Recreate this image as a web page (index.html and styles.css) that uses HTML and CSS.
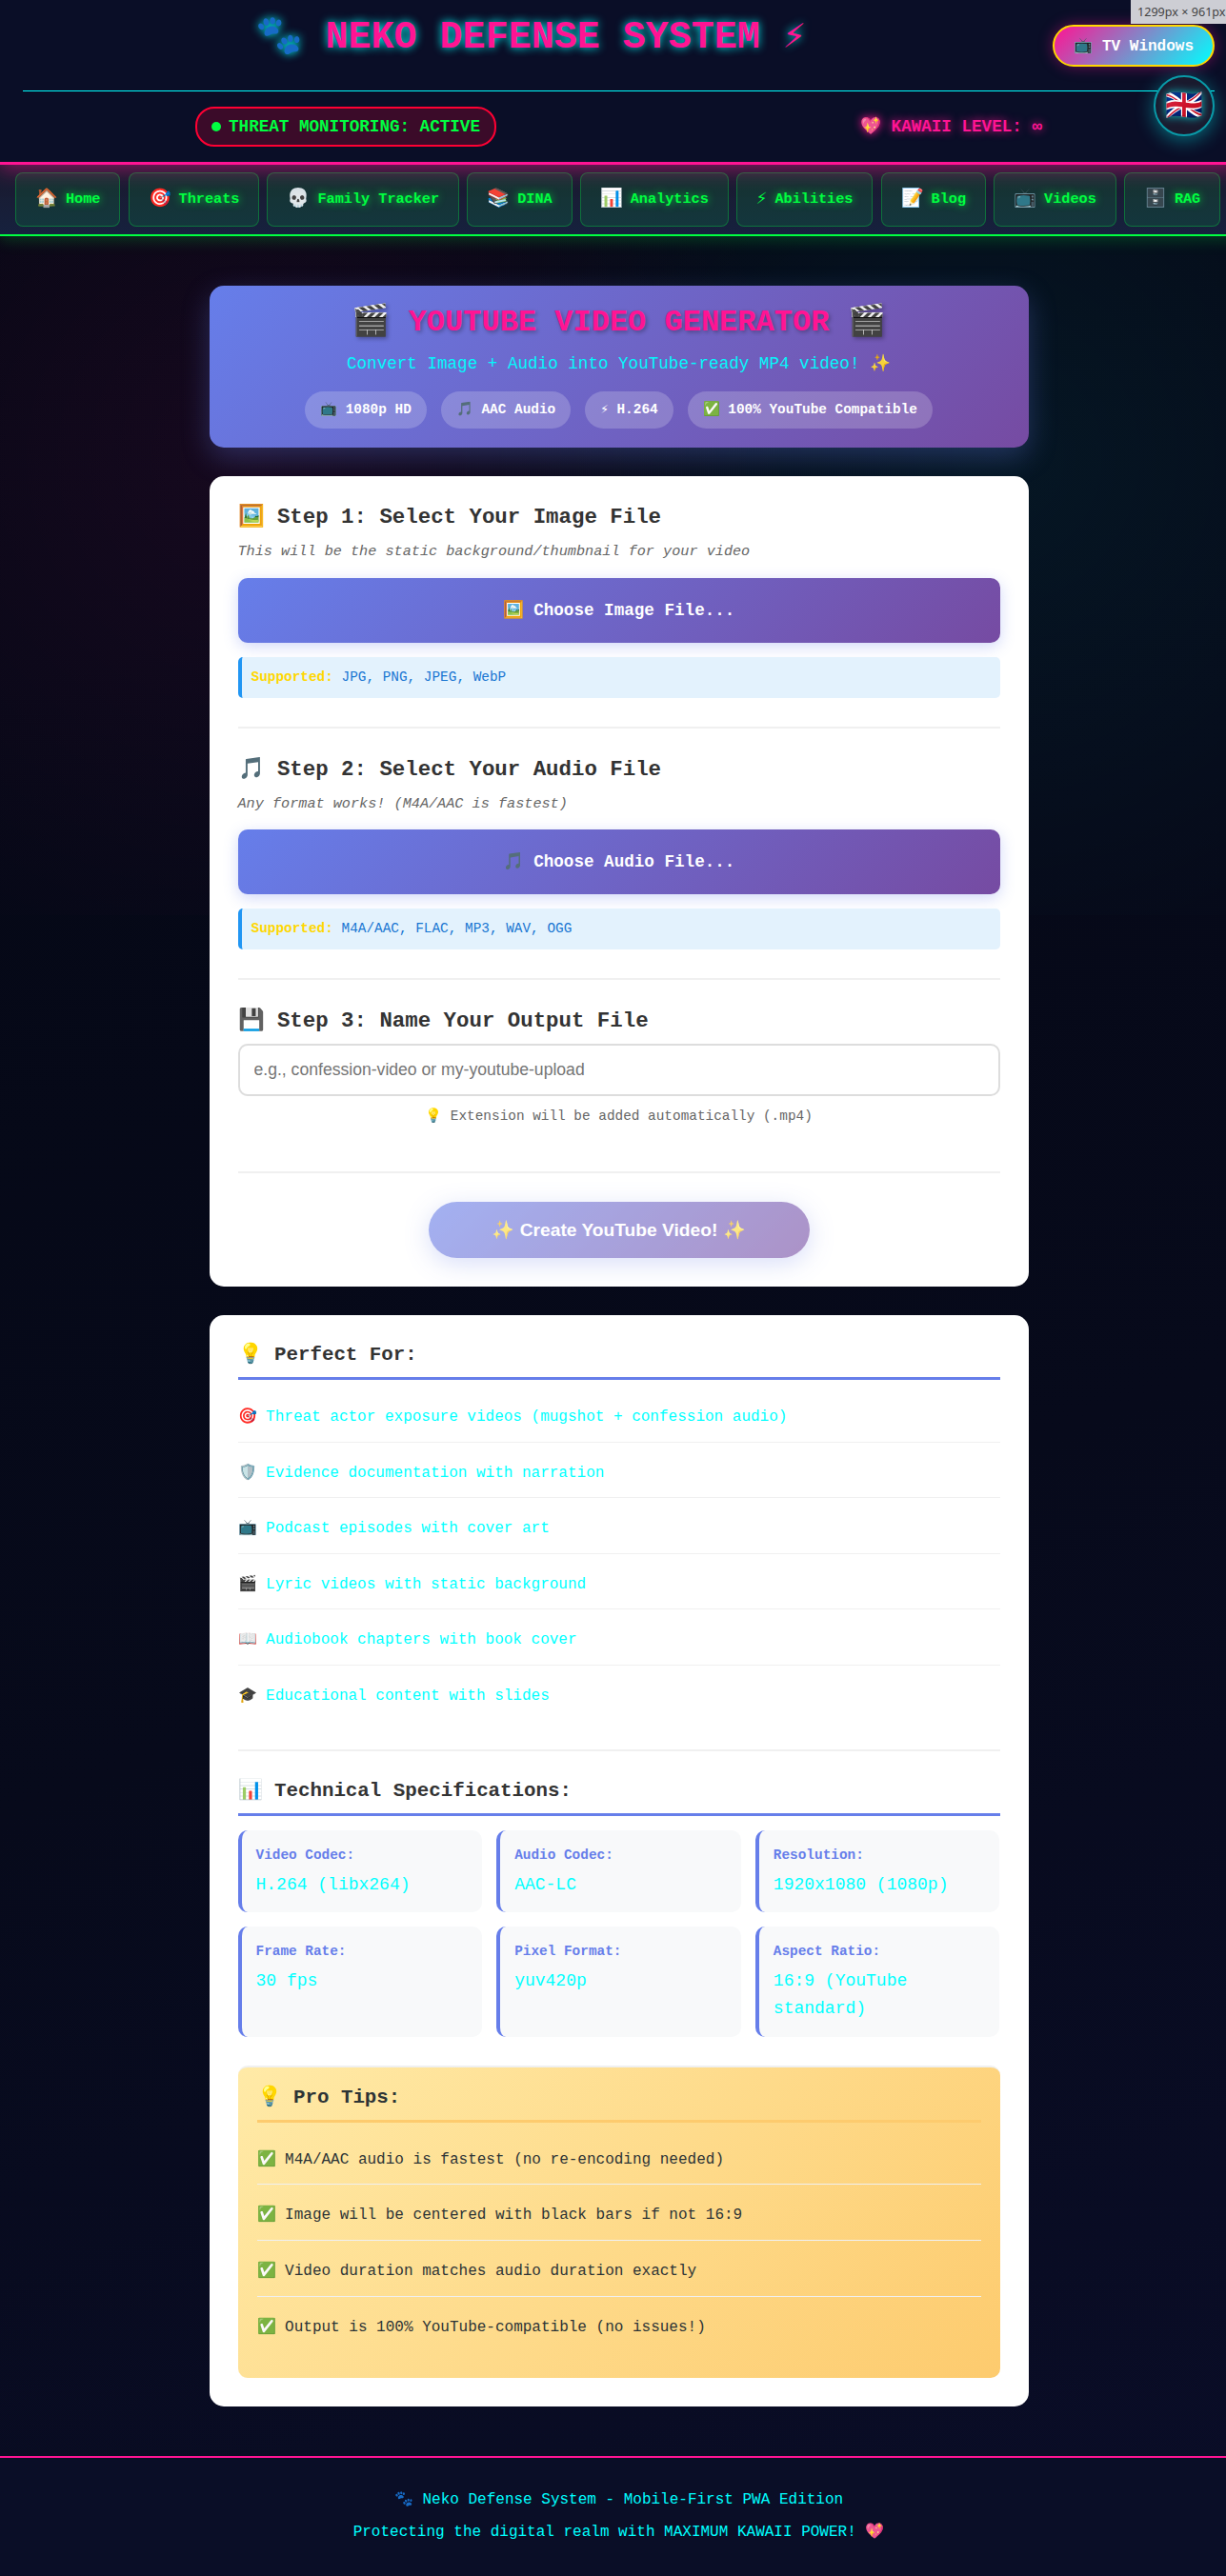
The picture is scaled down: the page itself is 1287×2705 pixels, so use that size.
FILE: index.html
```html
<!DOCTYPE html>
<html lang="en">
<head>
<meta charset="UTF-8">
<title>Neko Defense System - YouTube Video Generator</title>
<link rel="stylesheet" href="styles.css">
</head>
<body>
<div class="page">
  <header class="header">
    <div class="header-top">
      <h1 class="brand">🐾 NEKO DEFENSE SYSTEM ⚡</h1>
      <a class="tv-button">📺 TV Windows</a>
    </div>
    <div class="status-row">
      <div class="threat-status"><span class="dot"></span>THREAT MONITORING: ACTIVE</div>
      <div class="kawaii">💖 KAWAII LEVEL: ∞</div>
    </div>
    <div class="language">🇬🇧</div>
  </header>
  <nav class="nav">
    <a class="nav-item"><span class="nav-icon">🏠</span>Home</a>
    <a class="nav-item"><span class="nav-icon">🎯</span>Threats</a>
    <a class="nav-item"><span class="nav-icon">💀</span>Family Tracker</a>
    <a class="nav-item"><span class="nav-icon">📚</span>DINA</a>
    <a class="nav-item"><span class="nav-icon">📊</span>Analytics</a>
    <a class="nav-item"><span class="nav-icon">⚡</span>Abilities</a>
    <a class="nav-item"><span class="nav-icon">📝</span>Blog</a>
    <a class="nav-item"><span class="nav-icon">📺</span>Videos</a>
    <a class="nav-item"><span class="nav-icon">🗄️</span>RAG</a>
  </nav>
  <main class="main">
    <section class="hero">
      <h1 class="hero-title">🎬 YOUTUBE VIDEO GENERATOR 🎬</h1>
      <p class="hero-sub">Convert Image + Audio into YouTube-ready MP4 video! ✨</p>
      <div class="badges">
        <span class="badge">📺 1080p HD</span>
        <span class="badge">🎵 AAC Audio</span>
        <span class="badge">⚡ H.264</span>
        <span class="badge">✅ 100% YouTube Compatible</span>
      </div>
    </section>
    <div class="card">
      <section class="step">
        <h2 class="step-title">🖼️ Step 1: Select Your Image File</h2>
        <p class="step-desc">This will be the static background/thumbnail for your video</p>
        <label class="file-button">🖼️ Choose Image File...</label>
        <div class="formats"><strong>Supported:</strong> JPG, PNG, JPEG, WebP</div>
      </section>
      <section class="step">
        <h2 class="step-title">🎵 Step 2: Select Your Audio File</h2>
        <p class="step-desc">Any format works! (M4A/AAC is fastest)</p>
        <label class="file-button">🎵 Choose Audio File...</label>
        <div class="formats"><strong>Supported:</strong> M4A/AAC, FLAC, MP3, WAV, OGG</div>
      </section>
      <section class="step step-name">
        <h2 class="step-title">💾 Step 3: Name Your Output File</h2>
        <input class="name-input" type="text" placeholder="e.g., confession-video or my-youtube-upload">
        <p class="name-hint">💡 Extension will be added automatically (.mp4)</p>
      </section>
      <section class="step step-action">
        <button class="create-button" type="button">✨ Create YouTube Video! ✨</button>
      </section>
    </div>
    <div class="card">
      <section class="info">
        <h3 class="info-title">💡 Perfect For:</h3>
        <ul class="list">
          <li>🎯 Threat actor exposure videos (mugshot + confession audio)</li>
          <li>🛡️ Evidence documentation with narration</li>
          <li>📺 Podcast episodes with cover art</li>
          <li>🎬 Lyric videos with static background</li>
          <li>📖 Audiobook chapters with book cover</li>
          <li>🎓 Educational content with slides</li>
        </ul>
      </section>
      <section class="info">
        <h3 class="info-title">📊 Technical Specifications:</h3>
        <div class="specs">
          <div class="spec"><strong>Video Codec:</strong><span>H.264 (libx264)</span></div>
          <div class="spec"><strong>Audio Codec:</strong><span>AAC-LC</span></div>
          <div class="spec"><strong>Resolution:</strong><span>1920x1080 (1080p)</span></div>
          <div class="spec"><strong>Frame Rate:</strong><span>30 fps</span></div>
          <div class="spec"><strong>Pixel Format:</strong><span>yuv420p</span></div>
          <div class="spec"><strong>Aspect Ratio:</strong><span>16:9 (YouTube standard)</span></div>
        </div>
      </section>
      <section class="info tips">
        <h3 class="info-title">💡 Pro Tips:</h3>
        <ul class="list">
          <li>✅ M4A/AAC audio is fastest (no re-encoding needed)</li>
          <li>✅ Image will be centered with black bars if not 16:9</li>
          <li>✅ Video duration matches audio duration exactly</li>
          <li>✅ Output is 100% YouTube-compatible (no issues!)</li>
        </ul>
      </section>
    </div>
  </main>
  <footer class="footer">
    <p>🐾 Neko Defense System - Mobile-First PWA Edition</p>
    <p>Protecting the digital realm with MAXIMUM KAWAII POWER! 💖</p>
  </footer>
  <div class="size-tip">1299px × 961px</div>
</div>
</body>
</html>
```
FILE: styles.css
```css
* { box-sizing: border-box; margin: 0; padding: 0; }

html { overflow: hidden; background: #000; }

body {
  font-family: "Liberation Mono", "DejaVu Sans Mono", monospace;
  font-size: 16px;
  line-height: 1.6;
  color: #00ffff;
  overflow: hidden;
}

.page {
  position: relative;
  width: 1299px;
  min-height: 2705px;
  background:
    radial-gradient(circle at 20% 50%, rgba(255, 20, 147, 0.07) 0%, transparent 50%) 0 0 / 100% 961px no-repeat,
    radial-gradient(circle at 80% 50%, rgba(0, 255, 255, 0.06) 0%, transparent 50%) 0 0 / 100% 961px no-repeat,
    linear-gradient(160deg, #040713 0%, #070a1b 60%, #0a0d28 100%);
}

.header {
  position: relative;
  z-index: 2;
  height: 173px;
  padding: 0 24px;
  background: #0a0e27;
  border-bottom: 3px solid #ff1493;
  box-shadow: 0 4px 20px rgba(255, 20, 147, 0.5);
}

.header-top {
  display: flex;
  align-items: flex-start;
  gap: 16px;
  height: 95px;
}

.brand {
  flex: 1;
  padding-top: 8px;
  text-align: center;
  font-size: 40px;
  line-height: 64px;
  color: #ff1493;
  text-shadow: 0 0 10px #00ffff;
}

.tv-button {
  margin-top: 26px;
  height: 44px;
  padding: 0 20px;
  line-height: 42px;
  font-weight: bold;
  color: #fff;
  border: 2px solid #ffd700;
  border-radius: 25px;
  background: linear-gradient(135deg, #ff1493, #00ffff);
  box-shadow: 0 0 15px rgba(255, 20, 147, 0.4);
}

.status-row {
  display: flex;
  justify-content: space-around;
  align-items: center;
  gap: 20px;
  height: 75px;
  border-top: 1px solid #00ffff;
  font-size: 17.6px;
  font-weight: bold;
}

.threat-status {
  display: flex;
  align-items: center;
  gap: 8px;
  height: 42px;
  padding: 0 15px;
  color: #00ff41;
  border: 2px solid #ff0033;
  border-radius: 20px;
  background: rgba(255, 0, 51, 0.2);
}

.dot { width: 10px; height: 10px; border-radius: 50%; background: #00ff41; }

.kawaii { color: #ff1493; text-shadow: 0 0 10px #ff1493; }

.language {
  position: absolute;
  left: 1211px;
  top: 79px;
  width: 64px;
  height: 64px;
  border: 2px solid #0a9aa8;
  border-radius: 50%;
  background: #1a1a2e;
  box-shadow: 0 4px 20px rgba(0, 255, 255, 0.4);
  text-shadow: 0 0 10px rgba(0, 255, 255, 0.7);
  font-size: 32px;
  line-height: 64px;
  text-align: center;
}

.nav {
  display: flex;
  gap: 8.1px;
  height: 75px;
  padding: 8px 16px;
  background: linear-gradient(180deg, #1a1a2e, #16213e);
  border-bottom: 2px solid #00ff41;
  box-shadow: 0 4px 15px rgba(0, 255, 65, 0.2);
}

.nav-item {
  flex: none;
  display: flex;
  align-items: center;
  gap: 8px;
  height: 57px;
  padding: 0 20px;
  border: 1px solid rgba(0, 255, 65, 0.3);
  border-radius: 8px;
  background: rgba(0, 255, 65, 0.1);
  color: #00ff41;
  font-size: 15.2px;
  font-weight: bold;
  text-shadow: 0 0 8px rgba(0, 255, 65, 0.8);
  white-space: nowrap;
}

.nav-icon { font-size: 19.2px; text-shadow: none; }

.main { width: 860px; margin: 0 auto; padding: 52px 0; }

.hero {
  padding: 20px;
  text-align: center;
  border-radius: 15px;
  background: linear-gradient(135deg, #667eea 0%, #764ba2 100%);
  box-shadow: 0 10px 30px rgba(102, 126, 234, 0.3);
}

.hero-title {
  margin-bottom: 10px;
  font-size: 32px;
  line-height: 38.25px;
  color: #ff1493;
  text-shadow: 2px 2px 4px rgba(0, 0, 0, 0.3);
}

.hero-sub { margin-bottom: 15px; font-size: 17.6px; opacity: 0.95; }

.badges { display: flex; justify-content: center; gap: 15px; }

.badge {
  padding: 8px 16px;
  border-radius: 20px;
  background: rgba(255, 255, 255, 0.2);
  color: #fff;
  font-size: 14.4px;
  font-weight: bold;
}

.card { margin-top: 30px; padding: 30px; border-radius: 15px; background: #fff; }

.step + .step { margin-top: 30px; padding-top: 30px; border-top: 2px solid #f0f0f0; }

.step-title { margin-bottom: 10px; font-size: 22.4px; line-height: 1.2; color: #333; }

.step-desc { margin-bottom: 15px; font-size: 15.2px; font-style: italic; color: #666; }

.file-button {
  display: block;
  margin-bottom: 15px;
  padding: 20px;
  border-radius: 10px;
  background: linear-gradient(135deg, #667eea 0%, #764ba2 100%);
  box-shadow: 0 4px 15px rgba(102, 126, 234, 0.3);
  color: #fff;
  font-size: 17.6px;
  font-weight: bold;
  text-align: center;
}

.formats {
  padding: 10px;
  border-left: 4px solid #2196f3;
  border-radius: 5px;
  background: #e3f2fd;
  color: #1976d2;
  font-size: 14.4px;
}

.formats strong { color: #ffd700; }

.step-name { padding-bottom: 16px; }

.name-input {
  display: block;
  width: 100%;
  height: 55px;
  padding: 15px;
  border: 2px solid #ddd;
  border-radius: 10px;
  background: #fff;
  font-family: "Liberation Sans", sans-serif;
  font-size: 17.6px;
}

.name-input::placeholder { color: #757575; }

.name-hint { margin-top: 10px; font-size: 14.4px; color: #666; text-align: center; }

.create-button {
  display: block;
  width: 400px;
  height: 59px;
  margin: 0 auto;
  border: 0;
  border-radius: 30px;
  background: linear-gradient(135deg, #667eea 0%, #764ba2 100%);
  box-shadow: 0 6px 25px rgba(102, 126, 234, 0.4);
  color: #fff;
  font-family: "Liberation Sans", sans-serif;
  font-size: 19.2px;
  font-weight: bold;
  opacity: 0.6;
}

.info + .info { margin-top: 30px; padding-top: 30px; border-top: 2px solid #f0f0f0; }

.info-title {
  margin-bottom: 15px;
  padding-bottom: 10px;
  border-bottom: 3px solid #667eea;
  font-size: 20.8px;
  line-height: 1.2;
  color: #333;
}

.list { list-style: none; }

.list li { margin-bottom: 8px; padding: 12px 0; border-bottom: 1px solid #f0f0f0; }

.list li:last-child { border-bottom: 0; }

.specs { display: grid; grid-template-columns: repeat(3, 1fr); gap: 15px; }

.spec {
  padding: 15px;
  border-left: 4px solid #667eea;
  border-radius: 10px;
  background: #f8f9fa;
}

.spec strong { display: block; margin-bottom: 4.9px; color: #667eea; font-size: 14.4px; }

.spec span { display: block; font-size: 18px; }

.card .tips {
  padding: 20px;
  border-radius: 10px;
  background: linear-gradient(135deg, #ffeaa7 0%, #fdcb6e 100%);
  color: #2d3436;
}

.tips .info-title { border-color: #fdcb6e; color: #2d3436; }

.footer {
  padding: 32px 24px;
  background: #0a0e27;
  border-top: 2px solid #ff1493;
  text-align: center;
}

.footer p + p { margin-top: 8px; }

.size-tip {
  position: absolute;
  z-index: 3;
  left: 1187px;
  top: 0;
  width: 112px;
  height: 25px;
  padding-left: 7px;
  background: #cdced4;
  color: #444;
  font-family: "Noto Sans", sans-serif;
  font-size: 12.6px;
  line-height: 26px;
}
```
